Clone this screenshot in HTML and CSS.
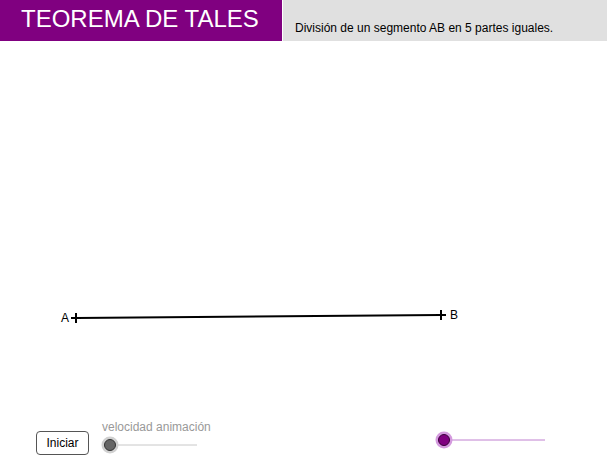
FILE: index.html
```html
<!DOCTYPE html>
<html lang="es">
<head>
<meta charset="utf-8">
<title>Teorema de Tales</title>
<link rel="stylesheet" href="styles.css">
</head>
<body>
<div class="app">
  <header class="header">
    <div class="title-box"><h1 class="title">TEOREMA DE TALES</h1></div>
    <div class="desc-box"><p class="desc">División de un segmento AB en 5 partes iguales.</p></div>
  </header>
  <main class="canvas">
    <svg class="drawing" width="609" height="425" viewBox="0 41 609 425" xmlns="http://www.w3.org/2000/svg">
      <line x1="76" y1="318" x2="441" y2="315" stroke="#000" stroke-width="2"/>
      <line x1="76" y1="313" x2="76" y2="323" stroke="#000" stroke-width="2"/>
      <line x1="71" y1="318" x2="81" y2="318" stroke="#000" stroke-width="2"/>
      <line x1="441" y1="310" x2="441" y2="320" stroke="#000" stroke-width="2"/>
      <line x1="436" y1="315" x2="446" y2="315" stroke="#000" stroke-width="2"/>
      <text x="61" y="322" class="pt-label">A</text>
      <text x="450" y="319" class="pt-label">B</text>
      <line x1="110" y1="445" x2="197" y2="445" stroke="#c8c8c8" stroke-width="1"/>
      <circle cx="110" cy="445" r="8.5" fill="#d0d0d0"/>
      <circle cx="110" cy="445" r="5.5" fill="#666" stroke="#333" stroke-width="1"/>
      <line x1="444" y1="440" x2="545" y2="440" stroke="#c080d0" stroke-width="1"/>
      <circle cx="444" cy="440" r="8.5" fill="#d49ade"/>
      <circle cx="444" cy="440" r="5.5" fill="#800080" stroke="#3a003a" stroke-width="1"/>
    </svg>
    <button class="btn">Iniciar</button>
    <span class="slider-label">velocidad animación</span>
  </main>
</div>
</body>
</html>
```
FILE: styles.css
```css
html, body {
  margin: 0;
  padding: 0;
  background: #fff;
}
.app {
  width: 609px;
  height: 466px;
  font-family: "Liberation Sans", Arial, sans-serif;
  overflow: hidden;
}
.header {
  display: flex;
  gap: 1px;
  height: 41px;
}
.title-box {
  width: 282px;
  background: #800080;
  display: flex;
  align-items: center;
}
.title {
  margin: 0 0 0 21px;
  color: #fff;
  font-weight: normal;
  font-size: 24px;
  line-height: 1;
  padding-bottom: 4px;
}
.desc-box {
  width: 324px;
  background: #e0e0e0;
  display: flex;
  align-items: flex-end;
}
.desc {
  margin: 0 0 6px 12px;
  font-size: 12px;
  color: #000;
}
.canvas {
  position: relative;
  height: 425px;
}
.drawing {
  display: block;
}
.pt-label {
  font-family: "Liberation Sans", Arial, sans-serif;
  font-size: 12px;
  fill: #000;
}
.btn {
  position: absolute;
  left: 36px;
  top: 390px;
  width: 53px;
  height: 24px;
  padding: 0;
  background: #fff;
  border: 1px solid #555;
  border-radius: 4px;
  font-family: "Liberation Sans", Arial, sans-serif;
  font-size: 12px;
  color: #000;
}
.slider-label {
  position: absolute;
  left: 102px;
  top: 379px;
  font-size: 12px;
  color: #999;
}
```
